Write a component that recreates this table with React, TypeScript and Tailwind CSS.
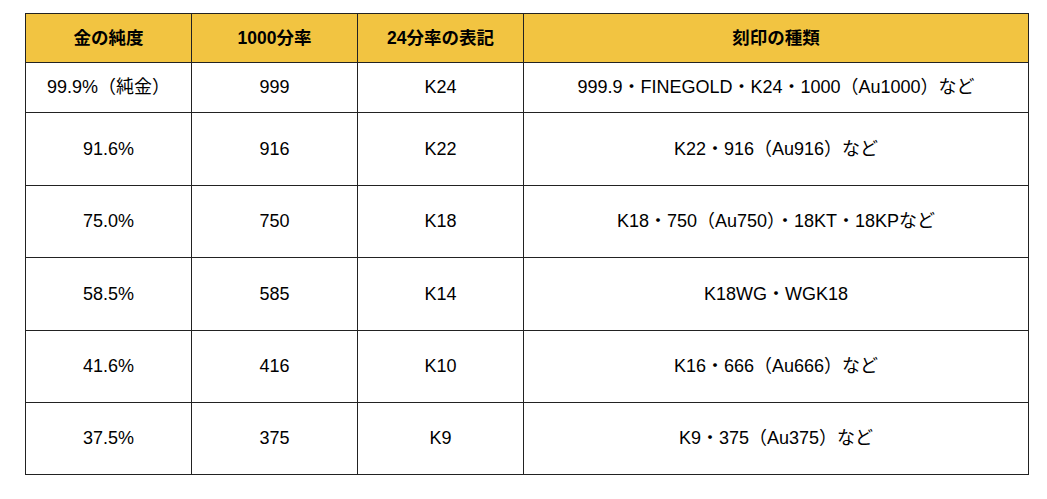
const rows = [
  { purity: "99.9%（純金）", per1000: "999", k: "K24", marks: "999.9・FINEGOLD・K24・1000（Au1000）など", h: "h-[50px]" },
  { purity: "91.6%", per1000: "916", k: "K22", marks: "K22・916（Au916）など", h: "h-[73px]" },
  { purity: "75.0%", per1000: "750", k: "K18", marks: "K18・750（Au750）・18KT・18KPなど", h: "h-[72px]" },
  { purity: "58.5%", per1000: "585", k: "K14", marks: "K18WG・WGK18", h: "h-[73px]" },
  { purity: "41.6%", per1000: "416", k: "K10", marks: "K16・666（Au666）など", h: "h-[72px]" },
  { purity: "37.5%", per1000: "375", k: "K9", marks: "K9・375（Au375）など", h: "h-[72px]" },
]

export default function App() {
  return (
    <div className="min-h-screen bg-white pt-[13px] pl-[25px] font-['Liberation_Sans','Noto_Sans_CJK_JP',sans-serif] text-[18px] text-black">
      <table className="border-collapse table-fixed w-[1004px]">
        <colgroup>
          <col className="w-[166px]" />
          <col className="w-[166px]" />
          <col className="w-[166px]" />
          <col />
        </colgroup>
        <thead>
          <tr className="h-[49px] bg-[#f2c441]">
            {["金の純度", "1000分率", "24分率の表記", "刻印の種類"].map((t) => (
              <th key={t} className="border border-[#222] font-bold text-[17.5px] text-center align-middle">
                {t}
              </th>
            ))}
          </tr>
        </thead>
        <tbody>
          {rows.map((r) => (
            <tr key={r.purity} className={r.h}>
              <td className="border border-[#222] text-center align-middle">{r.purity}</td>
              <td className="border border-[#222] text-center align-middle">{r.per1000}</td>
              <td className="border border-[#222] text-center align-middle">{r.k}</td>
              <td className="border border-[#222] text-center align-middle">{r.marks}</td>
            </tr>
          ))}
        </tbody>
      </table>
    </div>
  )
}
